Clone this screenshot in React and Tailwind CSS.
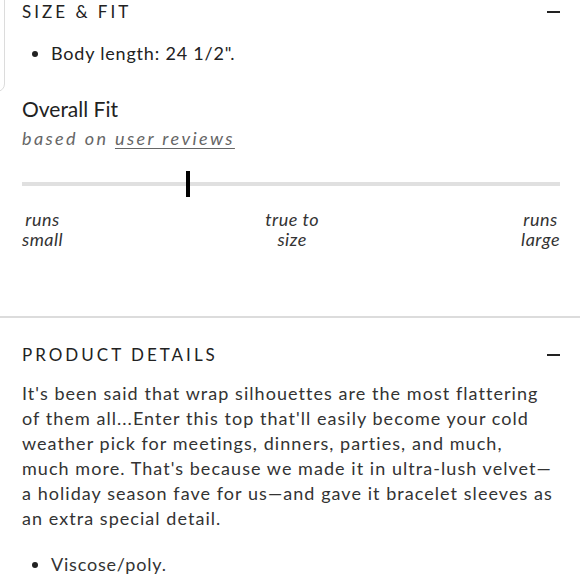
import React from 'react';

const font = { fontFamily: 'Lato, "Noto Sans", sans-serif' };

const Minus = () => <div className="w-[13px] h-[2px] bg-[#222]" />;

const FitLabel = ({ top, bottom }) => (
  <div className="text-center italic text-[18px] leading-[20px] tracking-[0.5px] text-[#333]">
    <div>{top}</div>
    <div>{bottom}</div>
  </div>
);

const detailLines = [
  "It's been said that wrap silhouettes are the most flattering",
  "of them all...Enter this top that'll easily become your cold",
  'weather pick for meetings, dinners, parties, and much,',
  "much more. That's because we made it in ultra-lush velvet—",
  'a holiday season fave for us—and gave it bracelet sleeves as',
  'an extra special detail.',
];

export default function App() {
  return (
    <div className="w-[580px] h-[580px] overflow-hidden bg-white text-[#222] relative" style={font}>
      {/* faint edge of the panel on the left */}
      <div className="absolute left-[-20px] top-[-20px] w-[25px] h-[112px] border border-[#dcdcdc] rounded-br-[8px]" />

      <section className="pl-[22px] pr-[20px] h-[316px]">
        <div className="flex justify-between items-center h-[24px]">
          <h2 className="text-[17px] tracking-[3px] uppercase">Size &amp; Fit</h2>
          <Minus />
        </div>
        <ul className="mt-[16px] pl-[10px]">
          <li className="flex items-center text-[18px] tracking-[0.8px]">
            <span className="w-[6px] h-[6px] rounded-full bg-[#222] mr-[13px]" />
            Body length: 24 1/2".
          </li>
        </ul>

        <div className="mt-[26px] text-[21px] text-[#222]">Overall Fit</div>
        <div className="italic text-[18px] tracking-[2.4px] text-[#666]">
          based on <span className="underline underline-offset-[3px]">user reviews</span>
        </div>

        <div className="relative mt-[30px] h-[4px] bg-[#e0e0e0]">
          <div className="absolute left-[164px] top-[-11px] w-[4px] h-[26px] bg-black" />
        </div>

        <div className="mt-[23px] flex justify-between">
          <FitLabel top="runs" bottom="small" />
          <FitLabel top="true to" bottom="size" />
          <FitLabel top="runs" bottom="large" />
        </div>
      </section>

      <div className="h-[2px] bg-[#dcdcdc]" />

      <section className="pl-[22px] pr-[20px] pt-[25px]">
        <div className="flex justify-between items-center h-[24px]">
          <h2 className="text-[17px] tracking-[3px] uppercase">Product Details</h2>
          <Minus />
        </div>
        <p className="mt-[14px] mr-[-20px] text-[18px] leading-[25px] tracking-[1.05px] text-[#333] whitespace-nowrap">
          {detailLines.map((line, i) => (
            <span key={i} className="block">{line}</span>
          ))}
        </p>
        <ul className="mt-[20px] pl-[10px]">
          <li className="flex items-center text-[18px] tracking-[0.8px] text-[#333]">
            <span className="w-[6px] h-[6px] rounded-full bg-[#222] mr-[13px]" />
            Viscose/poly.
          </li>
        </ul>
      </section>
    </div>
  );
}
